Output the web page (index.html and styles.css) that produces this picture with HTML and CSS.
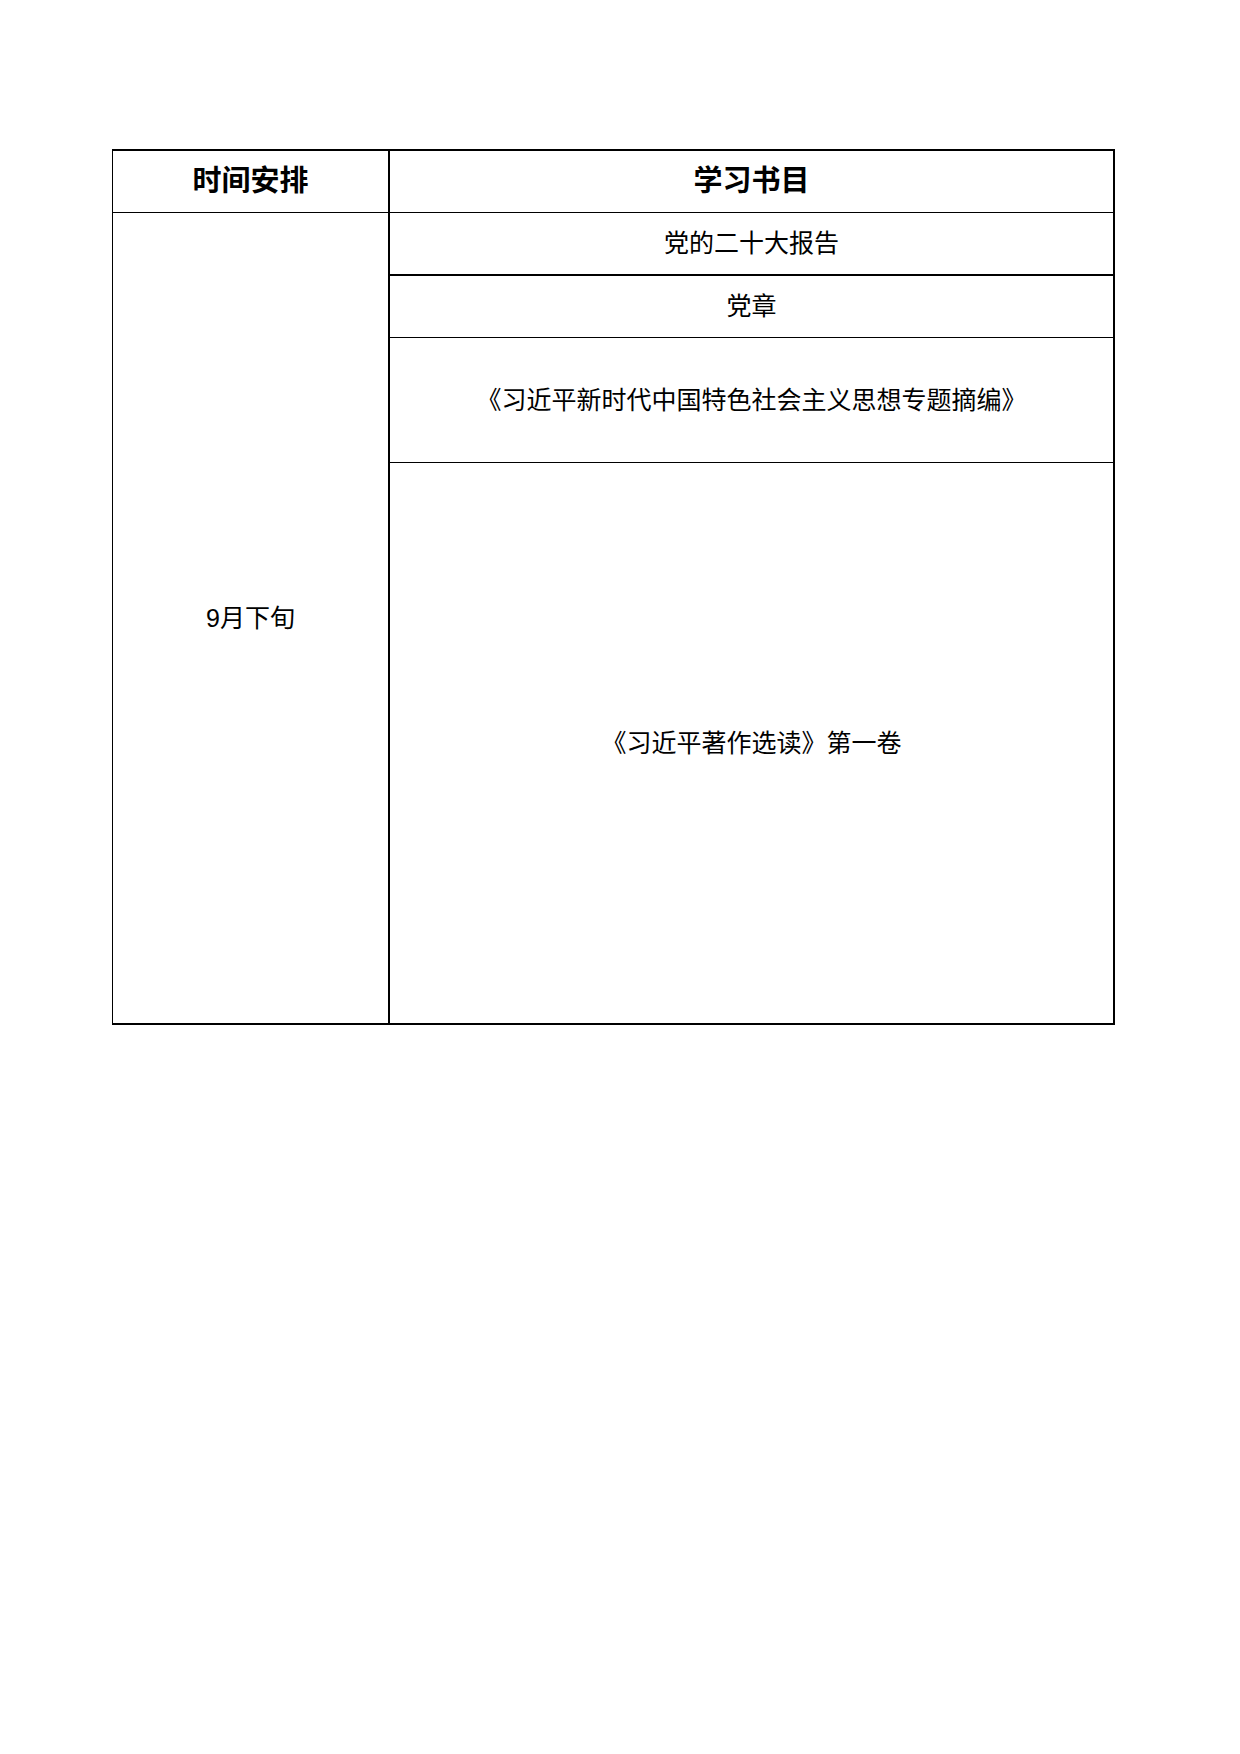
FILE: index.html
```html
<!DOCTYPE html>
<html lang="zh-CN">
<head>
<meta charset="utf-8">
<title>学习书目</title>
<link rel="stylesheet" href="styles.css">
</head>
<body>
<div class="page">
  <div class="sheet">
    <div class="cell head col1">时间安排</div>
    <div class="cell head">学习书目</div>
    <div class="cell time col1">9月下旬</div>
    <div class="cell r1">党的二十大报告</div>
    <div class="cell r2">党章</div>
    <div class="cell r3">《习近平新时代中国特色社会主义思想专题摘编》</div>
    <div class="cell r4">《习近平著作选读》第一卷</div>
  </div>
</div>
</body>
</html>
```
FILE: styles.css
```css
html, body {
  margin: 0;
  padding: 0;
  background: #fff;
}
.page {
  width: 1240px;
  height: 1754px;
  box-sizing: border-box;
  padding: 149px 0 0 112px;
  font-family: "Liberation Sans", "Noto Sans CJK SC", sans-serif;
  color: #000;
}
.sheet {
  box-sizing: border-box;
  display: grid;
  grid-template-columns: 277px 723px;
  grid-template-rows: 62px 63px 62px 125px 560px;
  width: 1003px;
  border-top: 2px solid #000;
  border-left: 1px solid #000;
  border-right: 2px solid #000;
  border-bottom: 2px solid #000;
}
.cell {
  box-sizing: border-box;
  display: flex;
  align-items: center;
  justify-content: center;
  font-size: 25px;
  line-height: 1;
  text-align: center;
}
.col1 {
  border-right: 2px solid #000;
}
.head {
  font-size: 29px;
  font-weight: bold;
  border-bottom: 1px solid #000;
}
.time {
  grid-column: 1;
  grid-row: 2 / 6;
}
.r1 {
  grid-column: 2;
  grid-row: 2;
  border-bottom: 2px solid #000;
}
.r2 {
  grid-column: 2;
  grid-row: 3;
  border-bottom: 1px solid #000;
}
.r3 {
  grid-column: 2;
  grid-row: 4;
  border-bottom: 1px solid #000;
}
.r4 {
  grid-column: 2;
  grid-row: 5;
}
```
